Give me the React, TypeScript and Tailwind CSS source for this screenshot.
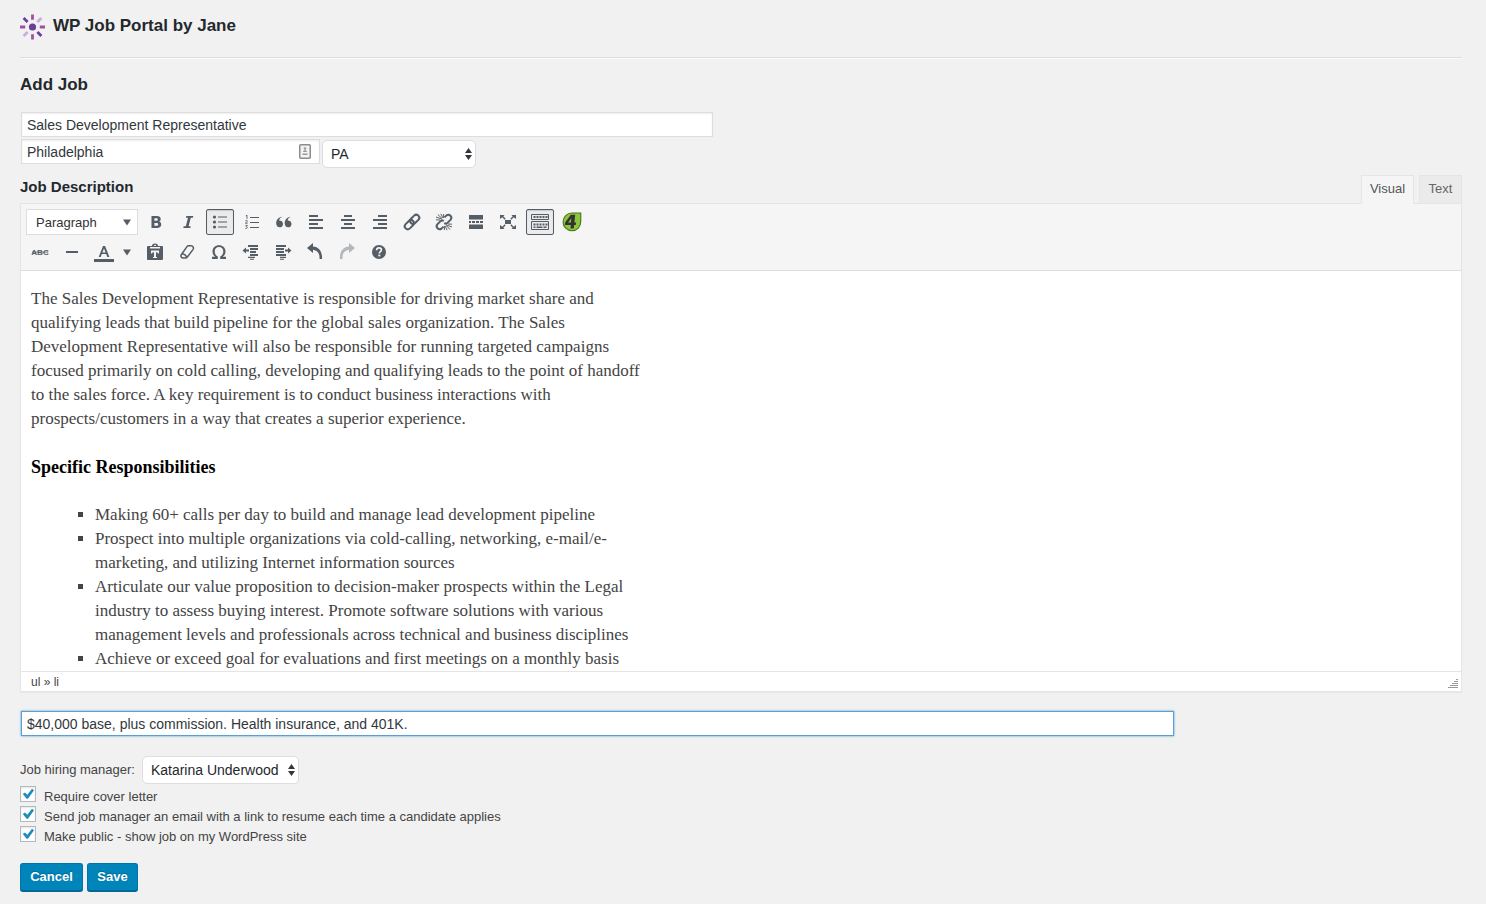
import { useState } from 'react';
import type { ReactNode } from 'react';

interface ToolButtonProps {
  label: string;
  active?: boolean;
  disabled?: boolean;
  children: ReactNode;
}

function ToolButton({ label, active = false, disabled = false, children }: ToolButtonProps) {
  return (
    <button
      type="button"
      aria-label={label}
      title={label}
      disabled={disabled}
      className={
        active
          ? 'flex h-[26px] w-7 items-center justify-center rounded-xs border border-[#555d66] bg-[#ebebeb] shadow-[inset_0_1px_1px_rgba(0,0,0,0.15)]'
          : 'flex h-[26px] w-7 items-center justify-center disabled:opacity-40'
      }
    >
      <svg viewBox="0 0 20 20" className="size-5 shrink-0" fill="currentColor" aria-hidden="true">
        {children}
      </svg>
    </button>
  );
}

function Caret() {
  return (
    <svg viewBox="0 0 8 7" className="h-[7px] w-2" fill="currentColor" aria-hidden="true">
      <path d="M0 0.5h8L4 6.5z" />
    </svg>
  );
}

function Logo() {
  return (
    <svg viewBox="0 0 26 26" className="size-[26px]" aria-hidden="true">
      <circle cx="12.5" cy="13" r="3.6" fill="#6b3f99" />
      <g strokeWidth="2.8">
        <path d="M12.5 0.5v5.2M12.5 20.3v5.2M0 13h5.2M19.8 13H25" stroke="#a24fa0" />
        <path d="M3.6 4.1l4 4M17.4 17.9l4 4" stroke="#6b3f99" />
        <path d="M21.4 4.1l-4 4M7.6 17.9l-4 4" stroke="#c9aed9" />
      </g>
    </svg>
  );
}

interface SelectBoxProps {
  id: string;
  label?: string;
  options: string[];
  className: string;
}

function SelectBox({ id, label, options, className }: SelectBoxProps) {
  return (
    <div className={`relative ${className}`}>
      <select
        id={id}
        aria-label={label}
        className="h-7 w-full appearance-none rounded-[5px] border border-[#ddd] bg-white pl-2 pr-3 text-sm text-[#23282d]"
      >
        {options.map((option) => (
          <option key={option}>{option}</option>
        ))}
      </select>
      <svg
        viewBox="0 0 7 12"
        className="pointer-events-none absolute right-1 top-2 h-3 w-[7px]"
        fill="#32373c"
        aria-hidden="true"
      >
        <path d="M3.5 0L7 5H0zM3.5 12L7 7H0z" />
      </svg>
    </div>
  );
}

function CheckRow({ id, label }: { id: string; label: string }) {
  const [checked, setChecked] = useState(true);

  return (
    <div className="flex h-5 items-start gap-2">
      <span className="grid size-4 shrink-0">
        <input
          id={id}
          type="checkbox"
          checked={checked}
          onChange={(e) => setChecked(e.target.checked)}
          className="col-start-1 row-start-1 size-4 appearance-none border border-[#b4b9be] bg-white shadow-[inset_0_1px_2px_rgba(0,0,0,0.1)]"
        />
        {checked && (
          <svg
            viewBox="0 0 16 16"
            className="pointer-events-none col-start-1 row-start-1 size-4"
            fill="#1e8cbe"
            aria-hidden="true"
          >
            <path d="M2.8 8.1l2.2-1.7 2.3 2.4L12 2.8l2 1.4-6 8.6H6.600z" />
          </svg>
        )}
      </span>
      <label htmlFor={id} className="text-[13px] leading-[21px] text-[#444]">
        {label}
      </label>
    </div>
  );
}

const inputClass =
  'block h-[25px] border border-[#ddd] bg-white px-[5px] text-sm text-[#32373c] shadow-[inset_0_1px_2px_rgba(0,0,0,0.07)] outline-none';
const buttonClass =
  'h-7 rounded-[3px] border border-[#0073aa] border-b-[#006799] bg-[#0085ba] text-[13px] font-bold text-white shadow-[0_1px_0_#006799] [text-shadow:0_-1px_1px_#006799]';

function Toolbar() {
  return (
    <div
      role="toolbar"
      aria-label="Formatting"
      className="flex flex-col gap-1 border-b border-[#ddd] bg-[#f5f5f5] p-[5px] text-[#555d66]"
    >
      <div className="flex gap-1">
        <button
          type="button"
          className="flex h-[26px] w-28 items-center justify-between border border-[#ddd] bg-white pl-[9px] pr-1.5 pt-px text-[13px] text-[#333]"
        >
          Paragraph
          <span className="text-[#555d66]">
            <Caret />
          </span>
        </button>
        <ToolButton label="Bold">
          <path
            fillRule="evenodd"
            d="M5.5 4h5.2c2.7 0 4 1.2 4 3.1 0 1.3-.7 2.2-1.8 2.5 1.500.3 2.300 1.300 2.300 2.900 0 2.300-1.600 3.500-4.400 3.500H5.500zm2.900 2.200v2.600h1.900c1 0 1.500-.5 1.500-1.300 0-.9-.5-1.300-1.600-1.300zm0 4.700v2.900h2.100c1.200 0 1.700-.5 1.700-1.500s-.6-1.400-1.800-1.400z"
          />
        </ToolButton>
        <ToolButton label="Italic">
          <path d="M8.300 4h7l-.4 1.800h-2.100L10.600 14.200h2.100l-.4 1.800h-7l.4-1.800h2.100l2.200-8.400H7.900z" />
        </ToolButton>
        <ToolButton label="Bulleted list" active>
          <circle cx="4.5" cy="5" r="1.6" />
          <circle cx="4.5" cy="10" r="1.6" />
          <circle cx="4.5" cy="15" r="1.6" />
          <path d="M8 4.5h9v1H8zM8 9.5h9v1H8zM8 14.5h9v1H8z" />
        </ToolButton>
        <ToolButton label="Numbered list">
          <path d="M8 5h9v1H8zM8 10h9v1H8zM8 15h9v1H8z" />
          <path
            d="M3.8 4l1.2-.8v3.6M3.4 8.8c.7-.7 2-.5 2 .3 0 .7-1.2 1.2-2 2.1h2.3M3.4 13.4h1.9l-1 1.2c1.7 0 1.5 2.1-1 1.8"
            fill="none"
            stroke="currentColor"
            strokeWidth="0.9"
          />
        </ToolButton>
        <ToolButton label="Blockquote">
          <path d="M8.4 4.7C6.2 5.5 5.1 7 5.2 8.5c2 0 3.800 1.200 3.800 3.400 0 2-1.400 3.400-3.300 3.400-2.200 0-3.500-1.800-3.500-4.100 0-3.300 2.200-6.100 6.200-6.500zM16.900 4.700c-2.200.8-3.300 2.300-3.200 3.800 2 0 3.800 1.200 3.800 3.400 0 2-1.400 3.400-3.300 3.400-2.200 0-3.500-1.800-3.500-4.100 0-3.300 2.200-6.100 6.200-6.500z" />
        </ToolButton>
        <ToolButton label="Align left">
          <path d="M3 3h9v2H3zM3 7h14v2H3zM3 11h9v2H3zM3 15h14v2H3z" />
        </ToolButton>
        <ToolButton label="Align center">
          <path d="M6 3h8v2H6zM3 7h14v2H3zM6 11h8v2H6zM3 15h14v2H3z" />
        </ToolButton>
        <ToolButton label="Align right">
          <path d="M8 3h9v2H8zM3 7h14v2H3zM8 11h9v2H8zM3 15h14v2H3z" />
        </ToolButton>
        <ToolButton label="Insert link">
          <g transform="rotate(-45 10 10)" fill="none" stroke="currentColor" strokeWidth="2">
            <rect x="1" y="7" width="10.500" height="6" rx="3" />
            <rect x="8.500" y="7" width="10.500" height="6" rx="3" />
          </g>
        </ToolButton>
        <ToolButton label="Remove link">
          <g fill="none" stroke="currentColor">
            <path
              d="M10.500 5.400l2-2a3 3 0 014.200 4.200l-3 3a3 3 0 01-3.500.5M9.500 14.600l-2 2a3 3 0 01-4.200-4.200l3-3a3 3 0 013.500-.5"
              strokeWidth="2"
            />
            <path
              d="M8 7.200L2 5M8.300 6.800L3.800 2.500M9 6L6.800 1.800M12 12.800l6 2.200M11.700 13.200l4.500 4.300M11 14l2.200 4.200M2 7.800l4 .2M14 12l4 .2M9.600 6V2M10.400 14V18"
              strokeWidth="1"
            />
          </g>
        </ToolButton>
        <ToolButton label="Insert Read More tag">
          <path d="M3 3h14v4.500H3zM3 9h2v2H3zM6 9h3v2H6zM10 9h3v2h-3zM14 9h3v2h-3zM3 12.500h14V17H3z" />
        </ToolButton>
        <ToolButton label="Distraction-free writing">
          <path d="M7 8h6v4H7zM2 3h4.600L5.300 4.300l2.400 2.400-1 1-2.400-2.400L2 7zM18 3v4l-2.300-1.700-2.400 2.400-1-1 2.400-2.400L13.400 3zM2 17v-4l2.300 1.700 2.400-2.400 1 1-2.400 2.400L6.600 17zM18 17h-4.600l1.300-1.300-2.400-2.400 1-1 2.400 2.400L18 13z" />
        </ToolButton>
        <ToolButton label="Toolbar toggle" active>
          <g fill="none" stroke="currentColor">
            <path d="M1.5 2.5h17v5h-17zM1.5 9.500h17v8h-17z" />
            <path d="M3.500 5h14" strokeWidth="2" strokeDasharray="2 1" />
            <path d="M3.500 12.500h14" strokeWidth="2" strokeDasharray="2 1" />
            <path d="M3.500 15.200h2m1 0h6m1 0h3" strokeWidth="1.500" />
          </g>
        </ToolButton>
        <ToolButton label="Insert form">
          <path d="M10 .5h9.300v9.200A9.400 9.400 0 1110 .500z" fill="#4c7414" />
          <path d="M10 1.600h8.200v8.100A8.300 8.300 0 1110 1.600z" fill="#8cc63f" />
          <path
            fillRule="evenodd"
            d="M8.800 2.800h4.400l-.8 7.700h1.700l-.3 2.500h-1.700l-.3 3.500H8.500l.3-3.500H2.800l.3-2.400zM9.300 6.300l-3.200 4.200h2.800z"
            fill="#333"
          />
        </ToolButton>
      </div>

      <div className="flex gap-1">
        <ToolButton label="Strikethrough">
          <text x="10" y="13" textAnchor="middle" fontSize="8" className="font-['Liberation_Sans'] font-bold">
            ABC
          </text>
          <path d="M2 9.700h16v.8H2z" />
        </ToolButton>
        <ToolButton label="Horizontal line">
          <path d="M4 9h12v2H4z" />
        </ToolButton>
        <div className="flex w-[47px]">
          <ToolButton label="Text color">
            <path d="M0 17h20v3H0z" />
            <path fillRule="evenodd" d="M9 4h2.100l4.300 11h-2.100l-1.100-3H7.800l-1.100 3H4.700zm1 2.400L8.400 10.400h3.200z" />
          </ToolButton>
          <button
            type="button"
            aria-label="Choose text color"
            className="flex h-[26px] w-[19px] items-center justify-center pr-0.5"
          >
            <Caret />
          </button>
        </div>
        <ToolButton label="Paste as text">
          <path
            fillRule="evenodd"
            d="M7 4c0-1.500 1-2.500 3-2.500s3 1 3 2.500h4a1 1 0 011 1v12a1 1 0 01-1 1H3a1 1 0 01-1-1V5a1 1 0 011-1zm2 0h2c0-.8-.3-1.200-1-1.200S9 3.200 9 4zM5 5v1.500h10V5zm1 3.500v3h1.200c0-1 .4-1.300 1.800-1.300V15H8v1h4v-1h-1v-4.800c1.400 0 1.800.3 1.800 1.300H14v-3z"
          />
        </ToolButton>
        <ToolButton label="Clear formatting">
          <path
            d="M11.500 3.800h2.700c1.700 0 2.900 2.200 1.900 3.600l-5.600 7.400c-.6.900-1.300 1.300-2.200 1.300H6.200c-1.800 0-2.900-2-1.900-3.400l5.500-7.800c.5-.7 1-1.100 1.700-1.100zM4.200 12.300c3-.8 5.300.8 5.300 3.700"
            fill="none"
            stroke="currentColor"
            strokeWidth="1.500"
          />
        </ToolButton>
        <ToolButton label="Special character">
          <path d="M3 17v-2.200h3.200C4.400 13.400 3.500 11.500 3.500 9.400 3.500 5.700 6.200 3.200 10 3.200s6.500 2.500 6.500 6.200c0 2.100-.9 4-2.700 5.400H17V17h-5.800v-2.400c2-1 3.100-2.800 3.100-5.100 0-2.600-1.700-4.400-4.300-4.400S5.700 6.900 5.700 9.500c0 2.300 1.100 4.100 3.100 5.100V17z" />
        </ToolButton>
        <ToolButton label="Decrease indent">
          <path d="M7 3h10v2H7zM9 6h8v2H9zM9 9h6v2H9zM9 12h8v2H9zM7 14.800h7v1.200H7zM9 16.800h4v1H9zM1.500 8.500l3.500-3v2h3v2H5v2z" />
        </ToolButton>
        <ToolButton label="Increase indent">
          <path d="M3 3h10v2H3zM3 6h8v2H3zM3 9h8v2H3zM3 12h10v2H3zM7 14.800h6V16H7zM7 16.800h4v1H7zM18.500 8.500l-3.500-3v2h-3v2h3v2z" />
        </ToolButton>
        <ToolButton label="Undo">
          <path d="M8 1v3.500c6 .5 9.500 5 9 12.500h-2.500c.4-5.500-1.800-8.800-6.500-9.300V11L2 6z" />
        </ToolButton>
        <ToolButton label="Redo" disabled>
          <path d="M12 1v3.500C6 5 2.500 9.500 3 17h2.500C5.100 11.500 7.300 8.200 12 7.700V11l6-5z" />
        </ToolButton>
        <ToolButton label="Keyboard shortcuts">
          <circle cx="10" cy="10" r="7" />
          <path
            d="M7.600 8.200c0-1.500 1-2.300 2.400-2.300s2.400.8 2.400 2c0 1.800-2.100 1.700-2.100 3.600"
            fill="none"
            stroke="#f5f5f5"
            strokeWidth="1.700"
          />
          <path d="M9.300 12.600h2v1.800h-2z" fill="#f5f5f5" />
        </ToolButton>
      </div>
    </div>
  );
}

function Editor() {
  return (
    <section aria-labelledby="description-heading">
      <div className="flex h-7 items-start justify-between">
        <h3 id="description-heading" className="pt-0.5 text-[15px] font-bold leading-5 text-[#23282d]">
          Job Description
        </h3>
        <div role="tablist" className="relative flex h-[29px] gap-[5px] text-[13px]">
          <button
            type="button"
            role="tab"
            aria-selected="true"
            className="w-[53px] border border-b-0 border-[#e5e5e5] bg-[#f5f5f5] pb-0.5 text-[#555]"
          >
            Visual
          </button>
          <button
            type="button"
            role="tab"
            aria-selected="false"
            className="w-[43px] border border-[#e5e5e5] bg-[#ebebeb] pb-0.5 text-[#666]"
          >
            Text
          </button>
        </div>
      </div>

      <div className="border border-[#e5e5e5] bg-white shadow-[0_1px_1px_rgba(0,0,0,0.04)]">
        <Toolbar />
        <div
          role="textbox"
          aria-multiline="true"
          aria-labelledby="description-heading"
          tabIndex={0}
          className="h-[400px] overflow-hidden whitespace-nowrap px-2.5 pt-4 font-['Georgia','Liberation_Serif',serif] text-[17px] leading-6 text-[#444] outline-none"
        >
          <p>
            The Sales Development Representative is responsible for driving market share and
            <br />
            qualifying leads that build pipeline for the global sales organization. The Sales
            <br />
            Development Representative will also be responsible for running targeted campaigns
            <br />
            focused primarily on cold calling, developing and qualifying leads to the point of handoff
            <br />
            to the sales force. A key requirement is to conduct business interactions with
            <br />
            prospects/customers in a way that creates a superior experience.
          </p>
          <p className="my-6 text-lg font-bold leading-6 text-black">Specific Responsibilities</p>
          <ul className="list-[square] pl-16">
            <li>Making 60+ calls per day to build and manage lead development pipeline</li>
            <li>
              Prospect into multiple organizations via cold-calling, networking, e-mail/e-
              <br />
              marketing, and utilizing Internet information sources
            </li>
            <li>
              Articulate our value proposition to decision-maker prospects within the Legal
              <br />
              industry to assess buying interest. Promote software solutions with various
              <br />
              management levels and professionals across technical and business disciplines
            </li>
            <li>Achieve or exceed goal for evaluations and first meetings on a monthly basis</li>
          </ul>
        </div>
        <div className="flex h-5 items-center justify-between border-t border-[#e5e5e5] pl-2.5 pr-[3px] text-xs text-[#444]">
          <span>ul » li</span>
          <svg viewBox="0 0 10 10" className="mt-1 size-2.5" aria-hidden="true">
            <path d="M8 0.500h2M6 2.500h4M4 4.500h6M2 6.500h8M0 8.500h10" stroke="#999" />
          </svg>
        </div>
      </div>
    </section>
  );
}

export default function App() {
  return (
    <main className="min-h-screen bg-[#f1f1f1] pb-3 pl-5 pr-6 font-['Liberation_Sans',Arial,sans-serif] text-[#444]">
      <header className="flex h-[58px] items-start gap-[7px] border-b border-[#ddd] pt-3.5 shadow-[0_1px_0_#fafafa]">
        <Logo />
        <h1 className="text-[17px] font-bold leading-6 text-[#23282d]">WP Job Portal by Jane</h1>
      </header>

      <form onSubmit={(e) => e.preventDefault()}>
        <h2 className="pt-[15px] text-[17px] font-bold leading-6 text-[#23282d]">Add Job</h2>

        <div className="mt-[15px] flex flex-col gap-0.5 pl-px">
          <input
            aria-label="Job title"
            defaultValue="Sales Development Representative"
            className={`${inputClass} w-[48%]`}
          />
          <div className="flex gap-0.5">
            <div className="relative w-[299px]">
              <input aria-label="City" defaultValue="Philadelphia" className={`${inputClass} w-full`} />
              <svg viewBox="0 0 12 15" className="absolute right-[9px] top-[5px] h-[15px] w-3" aria-hidden="true">
                <rect
                  x="0.750"
                  y="0.750"
                  width="10.500"
                  height="13.500"
                  rx="1"
                  fill="#f3f3f3"
                  stroke="#8c8c8c"
                  strokeWidth="1.500"
                />
                <circle cx="6" cy="4.500" r="1.300" fill="#999" />
                <path d="M4 8c0-2.500 4-2.500 4 0zM3.500 9.500h5v1.500h-5z" fill="#999" />
              </svg>
            </div>
            <SelectBox id="state" label="State" options={['PA', 'NJ', 'NY', 'DE']} className="mt-px w-[154px]" />
          </div>
        </div>

        <div className="mt-[7px]">
          <Editor />
        </div>

        <div className="mt-[19px] w-4/5 pl-px">
          <input
            aria-label="Compensation"
            defaultValue="$40,000 base, plus commission. Health insurance, and 401K."
            className="block h-[25px] w-full border border-[#5b9dd9] bg-white px-[5px] text-sm text-[#32373c] shadow-[0_0_2px_rgba(30,140,190,0.8)] outline-none"
          />
        </div>

        <div className="mt-5 flex items-center gap-[7px] text-[13px]">
          <label htmlFor="manager">Job hiring manager:</label>
          <SelectBox id="manager" options={['Katarina Underwood']} className="w-[157px]" />
        </div>

        <div className="mt-0.5">
          <CheckRow id="cover-letter" label="Require cover letter" />
          <CheckRow
            id="email-manager"
            label="Send job manager an email with a link to resume each time a candidate applies"
          />
          <CheckRow id="make-public" label="Make public - show job on my WordPress site" />
        </div>

        <div className="mt-[17px] flex gap-1">
          <button type="button" className={`${buttonClass} w-[63px]`}>
            Cancel
          </button>
          <button type="submit" className={`${buttonClass} w-[51px]`}>
            Save
          </button>
        </div>
      </form>
    </main>
  );
}
